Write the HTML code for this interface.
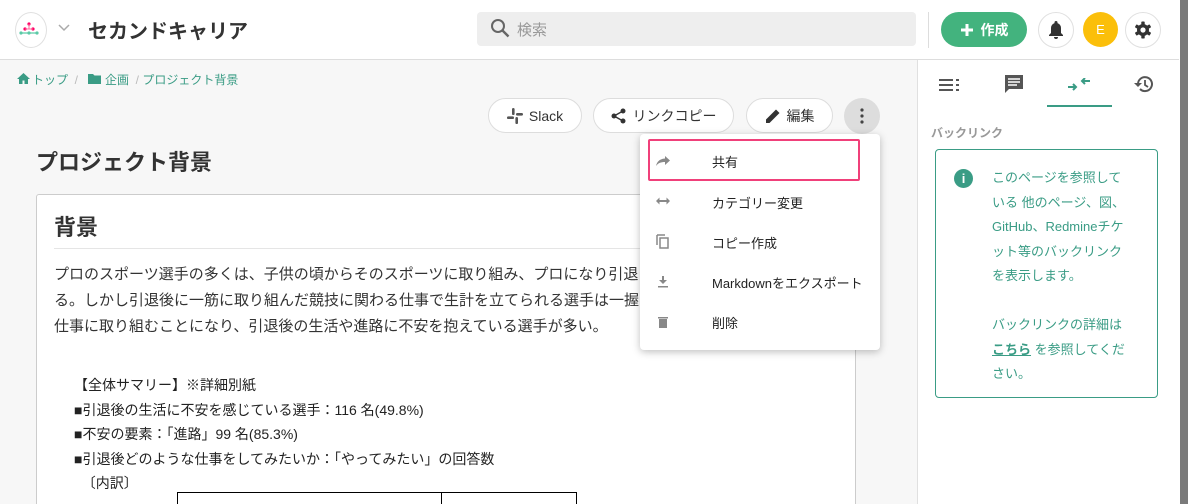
<!DOCTYPE html>
<html><head><meta charset="utf-8"><style>
*{box-sizing:border-box;margin:0;padding:0}
html{width:1188px;height:504px;overflow:hidden}
body{width:1188px;height:504px;overflow:hidden;background:#f7f7f7;font-family:"Liberation Sans","Noto Sans CJK JP",sans-serif;color:#333;position:relative}
.abs{position:absolute}
.hdr{left:0;top:0;width:1188px;height:60px;background:#fff;border-bottom:1px solid #ddd}
.circ{border:1px solid #e0e0e0;border-radius:50%;background:#fff}
.btn{border:1px solid #ddd;border-radius:18px;background:#fff;height:35px;display:flex;align-items:center;justify-content:center;font-size:14px;color:#333}
.side{left:917px;top:60px;width:262px;height:444px;background:#fff;border-left:1px solid #e0e0e0}
.menu{left:640px;top:134px;width:240px;height:216px;background:#fff;border-radius:4px;box-shadow:0 2px 8px rgba(0,0,0,.25)}
.mi{position:absolute;left:72px;font-size:13px;color:#222}
.ic{position:absolute;left:16px}
</style></head><body>
<div class="abs hdr"></div>
<div class="abs circ" style="left:15px;top:12px;width:32px;height:36px"></div>
<svg class="abs" style="left:18px;top:18px" width="26" height="22"><g fill="#f06"><circle cx="11" cy="6" r="1.6"/><circle cx="7" cy="11" r="1.6"/><circle cx="15" cy="11" r="1.6"/></g><path d="M7 11h8M11 6v5" stroke="#f69" stroke-width="1"/><path d="M2 15h18" stroke="#5cc9a7" stroke-width="1.2"/><g fill="#5cc9a7"><circle cx="3" cy="15" r="1.6"/><circle cx="11" cy="15" r="1.6"/><circle cx="19" cy="15" r="1.6"/></g></svg>
<svg class="abs" style="left:58px;top:24px" width="12" height="8"><path d="M1 1l5 5 5-5" stroke="#aaa" fill="none" stroke-width="1.5"/></svg>
<div class="abs" style="left:88px;top:15px;font-size:20px;font-weight:bold;color:#333">セカンドキャリア</div>
<div class="abs" style="left:477px;top:12px;width:439px;height:34px;background:#eee;border-radius:4px"></div>
<svg class="abs" style="left:490px;top:18px" width="22" height="22"><circle cx="8" cy="8" r="6" stroke="#666" stroke-width="2" fill="none"/><path d="M12.5 12.5l6 6" stroke="#666" stroke-width="2.4"/></svg>
<div class="abs" style="left:517px;top:19px;font-size:15px;color:#999">検索</div>
<div class="abs" style="left:928px;top:12px;width:1px;height:36px;background:#ddd"></div>
<div class="abs" style="left:941px;top:12px;width:86px;height:35px;background:#43b37e;border-radius:18px;color:#fff;font-size:14px;font-weight:bold;display:flex;align-items:center;justify-content:center"><svg width="14" height="14" style="margin-right:7px"><path d="M7 1v12M1 7h12" stroke="#fff" stroke-width="3"/></svg>作成</div>
<div class="abs circ" style="left:1038px;top:12px;width:36px;height:36px"></div>
<svg class="abs" style="left:1047px;top:20px" width="18" height="20"><path d="M9 1a1.5 1.5 0 0 1 1.5 1.5v.6A5 5 0 0 1 14 8v5l2 2v1H2v-1l2-2V8a5 5 0 0 1 3.5-4.9v-.6A1.5 1.5 0 0 1 9 1zM7 17h4a2 2 0 0 1-4 0z" fill="#333"/></svg>
<div class="abs" style="left:1083px;top:12px;width:35px;height:35px;border-radius:50%;background:#fbbf0a;color:#fff;font-size:13px;display:flex;align-items:center;justify-content:center">E</div>
<div class="abs circ" style="left:1125px;top:12px;width:36px;height:36px"></div>
<svg class="abs" style="left:1134px;top:21px" width="18" height="18" viewBox="0 0 18 18"><g fill="#333"><circle cx="9" cy="9" r="6"/><rect x="7.3" y="0.5" width="3.4" height="17" rx="0.8"/><rect x="7.3" y="0.5" width="3.4" height="17" rx="0.8" transform="rotate(60 9 9)"/><rect x="7.3" y="0.5" width="3.4" height="17" rx="0.8" transform="rotate(120 9 9)"/></g><circle cx="9" cy="9" r="2.6" fill="#fff"/></svg>

<svg class="abs" style="left:17px;top:73px" width="13" height="11"><path d="M6.5 0L0 6h2v5h3.5V7.5h2V11H11V6h2z" fill="#3a9c85"/></svg>
<div class="abs" style="left:32px;top:71px;font-size:12px;color:#3a9c85">トップ <span style="color:#bbb">&nbsp;/&nbsp;</span></div>
<svg class="abs" style="left:88px;top:73px" width="13" height="11"><path d="M0 1h5l1.5 1.5H13V11H0z" fill="#3a9c85"/></svg>
<div class="abs" style="left:105px;top:71px;font-size:12px;color:#3a9c85">企画 <span style="color:#bbb">&nbsp;/&nbsp;</span>プロジェクト背景</div>

<div class="abs btn" style="left:488px;top:98px;width:94px"><svg width="16" height="16" style="margin-right:6px" viewBox="0 0 16 16"><g fill="#555"><rect x="5" y="0" width="2.6" height="7" rx="1.3"/><rect x="8.4" y="9" width="2.6" height="7" rx="1.3"/><rect x="0" y="8.4" width="7" height="2.6" rx="1.3"/><rect x="9" y="5" width="7" height="2.6" rx="1.3"/></g></svg>Slack</div>
<div class="abs btn" style="left:593px;top:98px;width:141px"><svg width="16" height="16" style="margin-right:6px"><circle cx="12" cy="3" r="2.5" fill="#333"/><circle cx="3" cy="8" r="2.5" fill="#333"/><circle cx="12" cy="13" r="2.5" fill="#333"/><path d="M12 3L3 8l9 5" stroke="#333" stroke-width="1.4" fill="none"/></svg>リンクコピー</div>
<div class="abs btn" style="left:746px;top:98px;width:87px"><svg width="16" height="16" style="margin-right:6px"><path d="M1 15v-3.5L11 1.5 14.5 5 4.5 15z" fill="#333"/></svg>編集</div>
<div class="abs" style="left:844px;top:98px;width:36px;height:36px;border-radius:50%;background:#ddd"></div>
<svg class="abs" style="left:859px;top:108px" width="6" height="16"><g fill="#444"><circle cx="3" cy="2" r="1.6"/><circle cx="3" cy="8" r="1.6"/><circle cx="3" cy="14" r="1.6"/></g></svg>

<div class="abs" style="left:36px;top:145px;font-size:22px;font-weight:bold;color:#333">プロジェクト背景</div>
<div class="abs" style="left:36px;top:194px;width:820px;height:320px;background:#fff;border:1px solid #ccc;border-radius:3px"></div>
<div class="abs" style="left:54px;top:210px;font-size:22px;font-weight:bold;color:#333">背景</div>
<div class="abs" style="left:54px;top:248px;width:802px;height:1px;background:#e5e5e5"></div>
<div class="abs" style="left:54px;top:262px;width:802px;font-size:15px;line-height:26px;color:#333;white-space:nowrap;overflow:hidden">プロのスポーツ選手の多くは、子供の頃からそのスポーツに取り組み、プロになり引退<br>る。しかし引退後に一筋に取り組んだ競技に関わる仕事で生計を立てられる選手は一握<br>仕事に取り組むことになり、引退後の生活や進路に不安を抱えている選手が多い。</div>
<div class="abs" style="left:74px;top:373px;font-size:14px;line-height:24.5px;color:#222">【全体サマリー】※詳細別紙<br>■引退後の生活に不安を感じている選手：116 名(49.8%)<br>■不安の要素：「進路」99 名(85.3%)<br>■引退後どのような仕事をしてみたいか：「やってみたい」の回答数<br>&nbsp;&nbsp;〔内訳〕</div>
<div class="abs" style="left:177px;top:492px;width:400px;height:20px;border:1px solid #000"></div>
<div class="abs" style="left:441px;top:492px;width:1px;height:20px;background:#000"></div>

<div class="abs menu">
<div class="abs" style="left:8px;top:5px;width:212px;height:42px;border:2px solid #f0407a;border-radius:2px"></div>
<svg class="ic" style="top:22px" width="14" height="10"><path d="M9 0l5 4.5L9 9V6C5 6 2 7 0 10c1-4 3-7 9-7.5z" fill="#888"/></svg><div class="mi" style="top:18px">共有</div>
<svg class="ic" style="top:63px" width="14" height="8"><path d="M0 4l3.5-3.5v2.5h7V.5L14 4l-3.5 3.5V5h-7v2.5z" fill="#888"/></svg><div class="mi" style="top:59px">カテゴリー変更</div>
<svg class="ic" style="top:100px" width="14" height="16"><path d="M1 1h8M1 1v10" stroke="#888" stroke-width="1.5" fill="none"/><rect x="4" y="4" width="8" height="10" stroke="#888" stroke-width="1.5" fill="none"/></svg><div class="mi" style="top:99px">コピー作成</div>
<svg class="ic" style="top:141px" width="14" height="14"><path d="M3 5h3V1h2v4h3L7 9z M2 11h10v1.5H2z" fill="#888"/></svg><div class="mi" style="top:139px">Markdownをエクスポート</div>
<svg class="ic" style="top:181px" width="14" height="14"><path d="M2 2h10v1.5H2zM3 4h8v9H3z" fill="#888"/></svg><div class="mi" style="top:179px">削除</div>
</div>

<div class="abs side"></div>
<svg class="abs" style="left:939px;top:78px" width="22" height="14"><path d="M0 2h14M0 7h14M0 12h14M17 2h3M17 7h3M17 12h3" stroke="#555" stroke-width="2"/></svg>
<svg class="abs" style="left:1004px;top:74px" width="20" height="20"><path d="M1 1h18v14H5l-4 4z" fill="#555"/><path d="M4 5h12M4 8h12M4 11h9" stroke="#fff" stroke-width="1.4"/></svg>
<svg class="abs" style="left:1068px;top:78px" width="22" height="14"><path d="M0 9h8M5 6l3 3-3 3M22 3h-8M17 0l-3 3 3 3" stroke="#3a9c85" stroke-width="2" fill="none"/></svg>
<div class="abs" style="left:1047px;top:105px;width:65px;height:2px;background:#3a9c85"></div>
<svg class="abs" style="left:1133px;top:74px" width="22" height="20"><path d="M5 10a7 7 0 1 1 2 5" stroke="#555" stroke-width="2" fill="none"/><path d="M1 9l4 4 4-4z" fill="#555"/><path d="M12 6v5l3 2" stroke="#555" stroke-width="1.8" fill="none"/></svg>
<div class="abs" style="left:931px;top:124px;font-size:12px;font-weight:bold;color:#999">バックリンク</div>
<div class="abs" style="left:935px;top:149px;width:223px;height:249px;border:1px solid #3a9c85;border-radius:4px"></div>
<div class="abs" style="left:954px;top:169px;width:19px;height:19px;border-radius:50%;background:#3a9c85;color:#fff;font-size:13px;font-weight:bold;text-align:center;line-height:19px">i</div>
<div class="abs" style="left:992px;top:166px;width:142px;font-size:13px;line-height:24.5px;color:#3a9c85">このページを参照している 他のページ、図、GitHub、Redmineチケット等のバックリンクを表示します。<br><br>バックリンクの詳細は<br><b style="text-decoration:underline">こちら</b> を参照してください。</div>
<div class="abs" style="left:1179px;top:0;width:9px;height:504px;background:#fff"></div>
<div class="abs" style="left:1180px;top:0;width:8px;height:504px;background:#7a7a7a"></div>
</body></html>
